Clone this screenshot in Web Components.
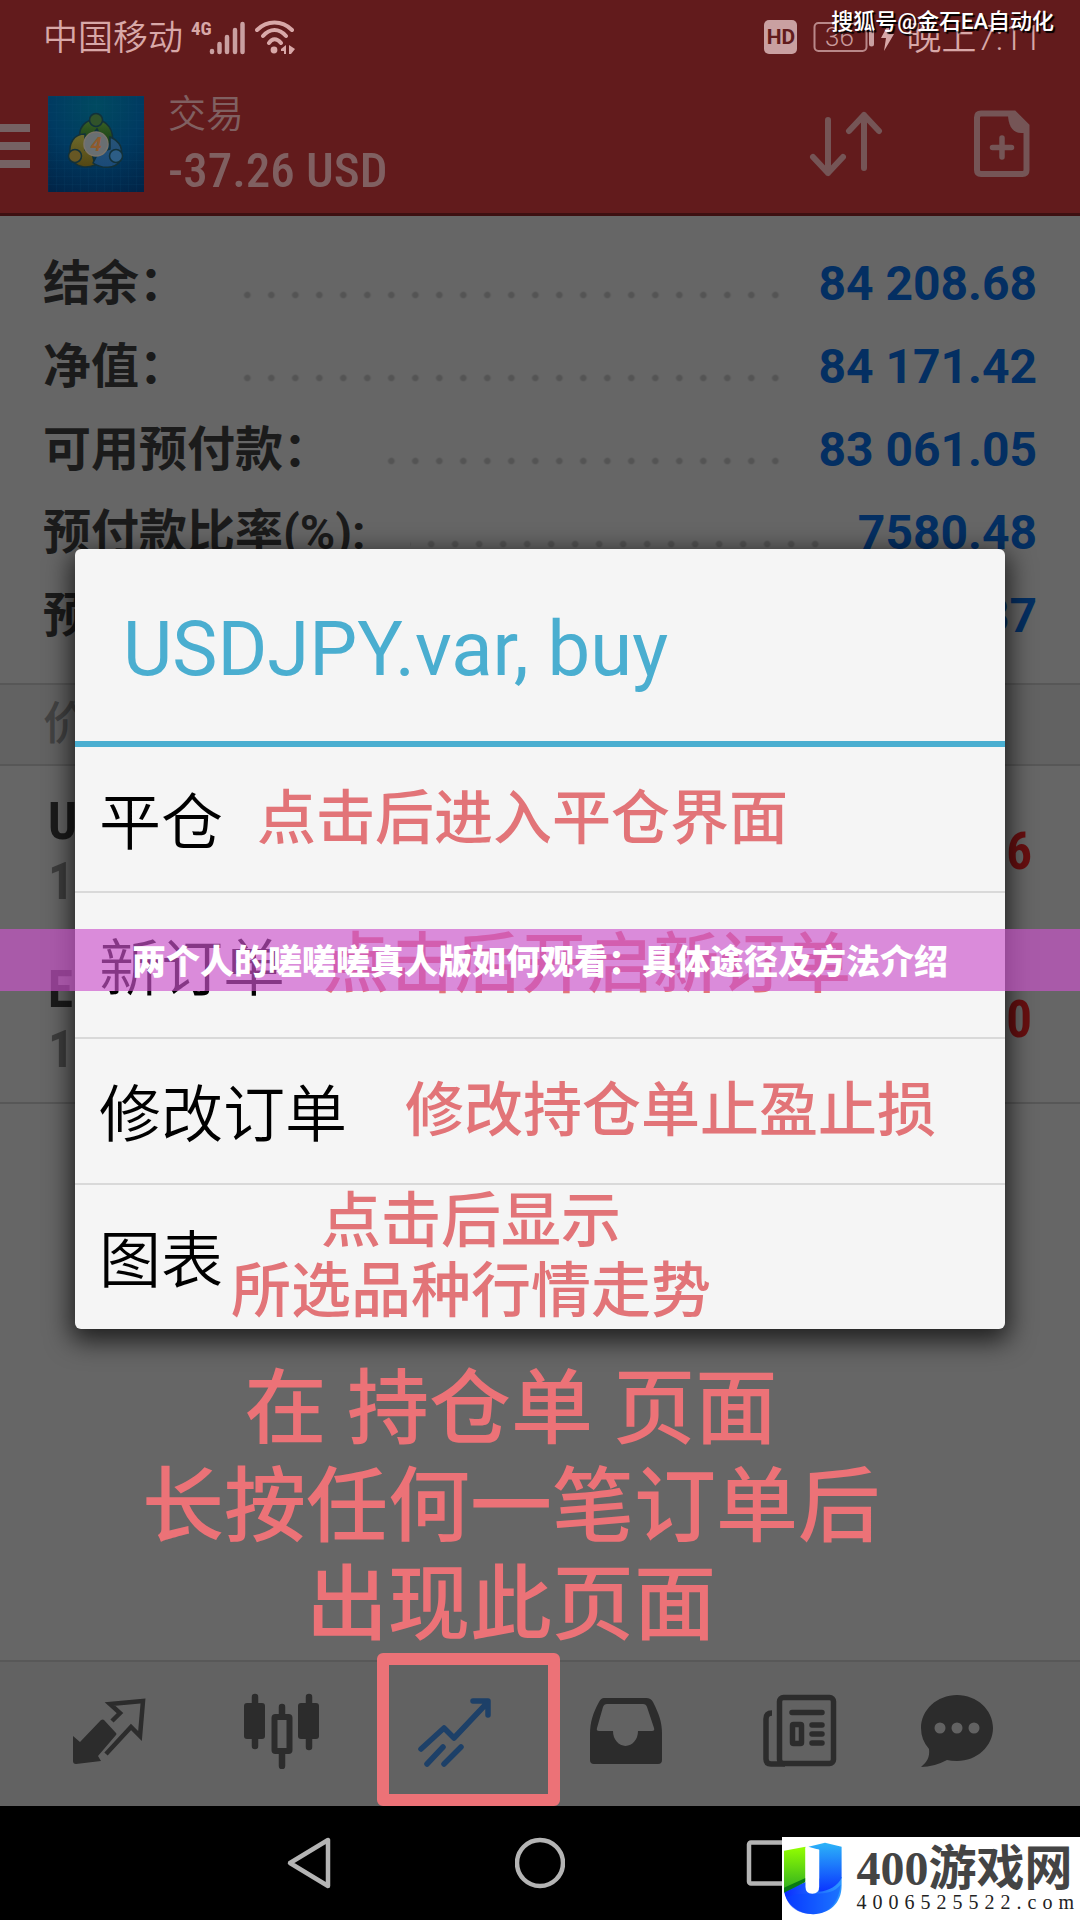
<!DOCTYPE html>
<html lang="zh-CN">
<head>
<meta charset="utf-8">
<meta name="viewport" content="width=device-width, initial-scale=1">
<title>交易</title>
<style>
  html, body { margin: 0; }
  body { background: #666; font-family: Roboto, "Noto Sans CJK SC", sans-serif; }
</style>
</head>
<body>
<trade-screen></trade-screen>

<script>
const define = (name, html) => {
  const template = document.createElement('template');
  template.innerHTML = '<style>*,*::after{box-sizing:border-box}button{font:inherit;color:inherit;background:none;border:0;padding:0;margin:0}svg{display:block}</style>' + html;
  customElements.define(name, class extends HTMLElement {
    constructor() {
      super();
      this.attachShadow({ mode: 'open' }).append(template.content.cloneNode(true));
    }
  });
};

define('status-bar', `
<style>
  :host { display: flex; align-items: center; height: 74px; padding: 0 38px 0 43px; color: #d8a8a8; font-size: 35px; line-height: 40px; font-weight: 350; }
  .text { padding-top: 4px; }
  .signal { margin-left: 8px; overflow: visible; }
  .wifi { margin-left: 10px; }
  .hd { margin-left: auto; background: #c9a0a1; color: #621b1c; font-size: 21px; font-weight: 700; width: 33px; height: 34px; line-height: 34px; border-radius: 5px; text-align: center; }
  .battery { margin: 0 10px 0 16px; }
</style>
<span class="text">中国移动</span>
<svg class="signal" width="54" height="44" viewBox="0 -4 54 44" aria-hidden="true">
  <text x="0" y="16" font-family="Roboto Condensed" font-size="19" font-weight="700" fill="#d8a8a8">4G</text>
  <g stroke="#c9a0a1" stroke-width="4.500" stroke-linecap="round">
    <path d="M21 32v1M28.500 25v8M36 18v15M44 11v22M51.500 5v28"/>
  </g>
</svg>
<svg class="wifi" width="42" height="36" viewBox="0 0 42 36" aria-hidden="true">
  <g fill="none" stroke="#d8a8a8" stroke-width="4" stroke-linecap="round">
    <path d="M2 11C12 1 27 1 37 11M8 17C15 9 24 9 31 17M14 24C17 19 22 19 26 24"/>
  </g>
  <circle cx="19" cy="31" r="3.400" fill="#d8a8a8"/>
  <path d="M31 26v9h-2v-3h-3v-2zM34 26l6 4-4 5h-2z" fill="#d8a8a8"/>
</svg>
<span class="hd">HD</span>
<svg class="battery" width="83" height="36" viewBox="0 0 83 36" aria-hidden="true">
  <rect x="1.500" y="4" width="52" height="28" rx="4" fill="none" stroke="#b98889" stroke-width="2"/>
  <text x="12" y="27" font-family="Roboto" font-size="26" fill="#c99a9b">36</text>
  <path d="M58.500 11v14" stroke="#c9a0a1" stroke-width="5" stroke-linecap="round"/>
  <path d="M76 4l-8 15h5l-2 13 10-17h-5z" fill="#d8a8a8"/>
</svg>
<span class="text">晚上7:11</span>
`);

define('top-bar', `
<style>
  :host { display: flex; align-items: center; height: 142px; border-bottom: 3px solid #3d1011; color: #806061; }
  .menu { width: 30px; height: 48px; padding-top: 4px; flex: none; }
  .app { margin-left: 18px; flex: none; }
  .title { margin: 0 auto 0 24px; padding-top: 8px; }
  h1 { margin: 0; font-size: 38px; line-height: 46px; font-weight: 350; }
  p { margin: 0; font-family: "Roboto Condensed", Roboto, sans-serif; font-size: 49px; line-height: 68px; font-weight: 500; white-space: nowrap; }
  .sort { margin-right: 90px; }
  .add { margin-right: 50px; }
</style>
<button class="menu" aria-label="菜单"><svg width="30" height="44" viewBox="0 0 30 44"><path d="M0 0h30v8H0zM0 18h30v8H0zM0 36h30v8H0z" fill="#756263"/></svg></button>
<svg class="app" width="96" height="96" viewBox="0 0 96 96" role="img" aria-label="MetaTrader 4">
  <defs>
    <radialGradient id="bg" cx=".5" cy=".1" r="1"><stop offset="0" stop-color="#004a60"/><stop offset=".5" stop-color="#003a61"/><stop offset="1" stop-color="#012447"/></radialGradient>
    <linearGradient id="g" x2="0" y2="1"><stop offset="0" stop-color="#3b6126"/><stop offset="1" stop-color="#143d14"/></linearGradient>
    <linearGradient id="y" x2="0" y2="1"><stop offset="0" stop-color="#6d6a2c"/><stop offset="1" stop-color="#534612"/></linearGradient>
    <linearGradient id="b" x2="0" y2="1"><stop offset="0" stop-color="#285477"/><stop offset="1" stop-color="#1a4a78"/></linearGradient>
    <pattern id="grid" width="8" height="8" patternUnits="userSpaceOnUse"><path d="M8 0H0v8" fill="none" stroke="#0a4f78" stroke-opacity=".25"/></pattern>
  </defs>
  <rect width="96" height="96" fill="url(#bg)"/><rect width="96" height="96" fill="url(#grid)"/>
  <g stroke="#12313a" stroke-width="1.500">
    <path d="M32 46C29 30 39 23 48 24c11 0 19 10 16 25l-9-4-6-12-8 10z" fill="url(#g)"/>
    <circle cx="48" cy="24" r="6.500" fill="#31532a"/>
    <path d="M37 38C25 38 21 48 22 58l4 8c5 6 14 6 21 3l-3-12-7-3z" fill="url(#y)"/>
    <circle cx="27" cy="60" r="6.500" fill="#665724"/>
    <path d="M62 41c10 4 14 12 10 24-5 8-18 8-27 2l5-10 12-4z" fill="url(#b)"/>
    <circle cx="68" cy="60" r="6.500" fill="#2c5d86"/>
    <circle cx="48" cy="48" r="12" fill="#696f72" stroke="#7b746a"/>
  </g>
  <text x="48" y="55" text-anchor="middle" font-family="Roboto" font-size="20" font-weight="700" font-style="italic" fill="#8f5a2b">4</text>
</svg>
<div class="title"><h1>交易</h1><p>-37.26 USD</p></div>
<button class="sort" aria-label="排序"><svg width="75" height="66" viewBox="0 0 75 66"><g fill="none" stroke="#755556" stroke-width="6" stroke-linecap="round" stroke-linejoin="round"><path d="M19 9v53M4 46l15 16 15-16M55 57V4M40 20L55 4l15 16"/></g></svg></button>
<button class="add" aria-label="新订单"><svg width="56" height="68" viewBox="0 0 56 68"><path d="M7 3.500h33L52.500 16v44q0 4-4 4H7q-4 0-4-4V7.500q0-4 4-4z" fill="none" stroke="#755556" stroke-width="6"/><path d="M34 4h8l11 11v8h-6C39 23 34 16 34 4z" fill="#755556"/><path d="M28 28v19M18.500 37.500h19" stroke="#755556" stroke-width="5.500" stroke-linecap="round"/></svg></button>
`);

define('summary-row', `
<style>
  :host { display: flex; align-items: center; height: 83px; padding: 0 43px; font-weight: 700; font-size: 48px; line-height: 60px; white-space: nowrap; }
  .label { color: #1b1b1b; }
  .dots { flex: 1; align-self: stretch; margin: 0 31px 0 44px; background: radial-gradient(circle 4px at 12px 53px, #545454 60%, transparent) right top / 24px 83px repeat-x; }
  .value { color: #042f62; }
</style>
<span class="label"><slot></slot></span><span class="dots"></span><span class="value"><slot name="value"></slot></span>
`);

define('position-row', `
<style>
  :host { display: flex; align-items: center; height: 168px; padding: 4px 48px 0; font-family: "Roboto Condensed", Roboto, sans-serif; font-size: 51px; line-height: 60px; font-weight: 700; }
  .id { margin-right: auto; }
  .symbol { color: #1b1b1b; }
  .price { color: #3e3e3e; }
  .profit { color: #680f10; }
</style>
<div class="id"><div class="symbol"><slot></slot></div><div class="price"><slot name="price"></slot></div></div>
<div class="profit"><slot name="profit"></slot></div>
`);

define('dialog-item', `
<style>
  :host { display: block; border-top: 2px solid #d9d9d9; }
  :host(:first-of-type) { border-top: 0; }
  button { display: flex; align-items: center; width: 100%; height: 144px; padding: 0 24px; gap: var(--gap, 34px); text-align: center; white-space: nowrap; }
  .label { padding-top: 10px; font-size: 62px; line-height: 70px; font-weight: 350; color: #000; }
  .note { font-size: var(--note, 59px); line-height: 70px; font-weight: 500; color: #e27478; }
</style>
<button type="button"><span class="label"><slot></slot></span><span class="note"><slot name="note"></slot></span></button>
`);

define('order-dialog', `
<style>
  :host { display: block; background: #f5f5f5; border-radius: 6px; box-shadow: 0 8px 26px 4px rgba(0,0,0,.7); }
  h2 { margin: 0; height: 198px; padding: 8px 48px 0; border-bottom: 6px solid #4aaed0; font-size: 76px; line-height: 184px; font-weight: 400; color: #4aaed0; white-space: nowrap; }
</style>
<h2><slot name="title"></slot></h2>
<slot></slot>
`);

define('tab-bar', `
<style>
  :host { display: grid; grid-template-columns: repeat(5, 172fr) 141fr; height: 146px; padding: 0 52px 0 23px; background: #626262; border-top: 2px solid #585858; }
  button { display: flex; align-items: center; justify-content: center; position: relative; padding-bottom: 6px; }
  .active::after { content: ""; position: absolute; left: 9px; width: 183px; top: -9px; bottom: 0; border: 12px solid #ec7277; border-radius: 6px; }
</style>
<button aria-label="行情"><svg width="76" height="76" viewBox="0 0 76 76"><path d="M2 43l7 6 21-22q2-1 3 0l12 13q1 1 0 2L27 63l3 5-25 3q-3 0-3-3z" fill="#2c2c2c"/><path d="M41 28l8-8-10-9 33-3-3 35-9-9-25 27" fill="none" stroke="#2c2c2c" stroke-width="4.500"/></svg></button>
<button aria-label="图表"><svg width="76" height="76" viewBox="0 0 76 76"><g stroke="#2c2c2c" stroke-width="6.500" stroke-linecap="round"><path d="M11 4v49M65 4v50M38 14v12M38 60v13"/></g><rect x="0" y="10" width="21" height="36" rx="3" fill="#2c2c2c"/><rect x="54" y="10" width="21" height="36" rx="3" fill="#2c2c2c"/><rect x="30.500" y="24" width="15" height="34" rx="1" fill="#626262" stroke="#2c2c2c" stroke-width="6"/></svg></button>
<button class="active" aria-label="交易"><svg width="76" height="76" viewBox="0 0 76 76"><g fill="none" stroke="#1d4068" stroke-width="5.500" stroke-linecap="round" stroke-linejoin="round"><path d="M4 56l23-21 10 10L70 10M56 8h15v14M10 71l16-17M27 71l17-17"/></g></svg></button>
<button aria-label="历史"><svg width="76" height="76" viewBox="0 0 76 76"><path fill-rule="evenodd" d="M15 5h42q5 0 7 4c6 12 9 20 9 32v26q0 4-4 4H5q-4 0-4-4V41C1 29 4 20 10 9q2-4 5-4zM18 11q-3 0-4 3L8 35q-1 3 2 3h14a12.500 15 0 0 0 25 0h14q3 0 2-3l-7-21q-1-3-4-3z" fill="#2c2c2c"/></svg></button>
<button aria-label="新闻"><svg width="76" height="76" viewBox="0 0 76 76"><g fill="none" stroke="#2c2c2c" stroke-width="5.500"><rect x="17.500" y="4.500" width="54" height="66" rx="4"/><path d="M10 20q-6 0-6 6v40q0 5 5 5h14" /><path d="M30 19.500h30M50 32h10M50 41h10M50 50h10" stroke-linecap="round"/><rect x="30.500" y="31.500" width="9" height="19" rx="1"/></g></svg></button>
<button aria-label="消息"><svg width="76" height="76" viewBox="0 0 76 76"><path fill-rule="evenodd" d="M38 2c20 0 36 15 36 33S58 68 38 68q-6 0-10-1Q15 74 2 74c6-5 9-10 8-18Q2 47 2 35C2 17 18 2 38 2zM21 29.500a5.500 5.500 0 1 0 0 11 5.500 5.500 0 0 0 0-11zM38 29.500a5.500 5.500 0 1 0 0 11 5.500 5.500 0 0 0 0-11zM55 29.500a5.500 5.500 0 1 0 0 11 5.500 5.500 0 0 0 0-11z" fill="#2c2c2c"/></svg></button>
`);

define('nav-bar', `
<style>
  :host { display: block; background: #000; }
  nav { display: flex; align-items: center; justify-content: center; gap: 180px; height: 114px; }
</style>
<nav>
<button aria-label="返回"><svg width="50" height="54" viewBox="0 0 50 54"><path d="M43 4v46L5 27z" fill="none" stroke="#b4b4b4" stroke-width="4.500" stroke-linejoin="round"/></svg></button>
<button aria-label="主页"><svg width="50" height="54" viewBox="0 0 50 54"><circle cx="25" cy="27" r="23" fill="none" stroke="#b4b4b4" stroke-width="4.500"/></svg></button>
<button aria-label="最近"><svg width="50" height="54" viewBox="0 0 50 54"><rect x="4" y="6.500" width="41" height="41" rx="2" fill="none" stroke="#b4b4b4" stroke-width="4.500"/></svg></button>
</nav>
`);

define('site-badge', `
<style>
  :host { display: flex; align-items: center; gap: 13px; background: #fff; height: 83px; width: 298px; padding-left: 1px; overflow: hidden; }
  .words { display: flex; flex-direction: column; white-space: nowrap; }
  .name { font-size: 48px; line-height: 46px; font-weight: 700; color: #444; font-family: "Liberation Serif", "Noto Sans CJK SC", sans-serif; }
  .url { font-size: 20px; line-height: 20px; letter-spacing: 6px; color: #222; font-family: "Liberation Serif", serif; }
</style>
<svg width="62" height="74" viewBox="0 0 62 74" aria-hidden="true">
  <defs>
    <linearGradient id="a" x2="0" y2="1"><stop offset="0" stop-color="#93ff00"/><stop offset="1" stop-color="#2fae20"/></linearGradient>
    <linearGradient id="b" x2="0" y2="1"><stop offset="0" stop-color="#2cb4f8"/><stop offset="1" stop-color="#0a34ff"/></linearGradient>
    <linearGradient id="c" x2="1" y2="0"><stop offset="0" stop-color="#0a2cff"/><stop offset="1" stop-color="#2e9bff"/></linearGradient>
  </defs>
  <path d="M1 49l30-12 29-2v9c0 18-13 29-29 29S3 63 1 49z" fill="url(#c)"/>
  <path d="M1 8l22-4v35L1 49z" fill="url(#a)"/><path d="M1 46l22-10v4L1 51z" fill="#087a14"/>
  <path d="M26 4l17-4 17 4v32c-4 8-13 13-23 14V7z" fill="url(#b)"/>
  <path d="M3 56c22-9 43 3 56-13-2 19-13 30-28 30S7 67 3 56z" fill="#0647ff" opacity=".45"/>
  <path d="M23 5l14 2v38q0 7-7 7t-7-7z" fill="#fff"/>
</svg>
<div class="words"><span class="name">400游戏网</span><span class="url">4006525522.com</span></div>
`);

define('trade-screen', `
<style>
  :host { display: flex; flex-direction: column; position: relative; min-height: 100vh; overflow: hidden; background: #666; }
  header { background: #621b1c; }
  main { flex: 1; display: flex; flex-direction: column; }
  .summary { padding: 26px 0; }
  .heading { margin: 0; height: 83px; padding: 0 43px; font-size: 46px; line-height: 76px; font-weight: 500; color: #434343; background: #626262; border: solid #575757; border-width: 2px 0; }
  .list { border-bottom: 2px solid #575757; }
  .caption { margin: auto 58px 6px 0; text-align: center; font-size: 82px; line-height: 98px; font-weight: 500; color: #ec7277; }
  order-dialog { position: absolute; left: 75px; right: 75px; top: 549px; }
  .banner { position: absolute; left: 0; right: 0; top: 929px; margin: 0; text-align: center; font-size: 34px; line-height: 62px; font-weight: 900; color: #fff; background: rgba(204,84,203,.66); white-space: nowrap; font-family: "Noto Sans CJK SC", sans-serif; }
  .credit { position: absolute; right: 26px; top: 7px; font-size: 22px; line-height: 30px; color: #fff; text-shadow: 2px 2px 1px #000; font-weight: 500; }
  site-badge { position: absolute; right: 0; bottom: 0; }
</style>
<header><status-bar></status-bar><top-bar></top-bar></header>
<main>
  <section class="summary">
    <summary-row>结余：<span slot="value">84 208.68</span></summary-row>
    <summary-row>净值：<span slot="value">84 171.42</span></summary-row>
    <summary-row>可用预付款：<span slot="value">83 061.05</span></summary-row>
    <summary-row>预付款比率(%):<span slot="value">7580.48</span></summary-row>
    <summary-row>预付款：<span slot="value">1 110.37</span></summary-row>
  </section>
  <h2 class="heading">价位</h2>
  <section class="list">
    <position-row>USDJPY<span slot="price">111</span><span slot="profit">-37.26</span></position-row>
    <position-row>EURUSD<span slot="price">1.1</span><span slot="profit">0.00</span></position-row>
  </section>
  <div class="caption">在 持仓单 页面<br>长按任何一笔订单后<br>出现此页面</div>
</main>
<tab-bar></tab-bar>
<nav-bar></nav-bar>
<order-dialog role="dialog" aria-label="USDJPY.var, buy">
  <span slot="title">USDJPY.var, buy</span>
  <dialog-item>平仓<span slot="note">点击后进入平仓界面</span></dialog-item>
  <dialog-item style="--gap:38px;--note:66px">新订单<span slot="note">点击后开启新订单</span></dialog-item>
  <dialog-item style="--gap:58px">修改订单<span slot="note">修改持仓单止盈止损</span></dialog-item>
  <dialog-item style="--gap:8px;--note:60px">图表<span slot="note">点击后显示<br>所选品种行情走势</span></dialog-item>
</order-dialog>
<p class="banner">两个人的嗟嗟嗟真人版如何观看：具体途径及方法介绍</p>
<span class="credit">搜狐号@金石EA自动化</span>
<site-badge></site-badge>
`);
</script>
</body>
</html>
